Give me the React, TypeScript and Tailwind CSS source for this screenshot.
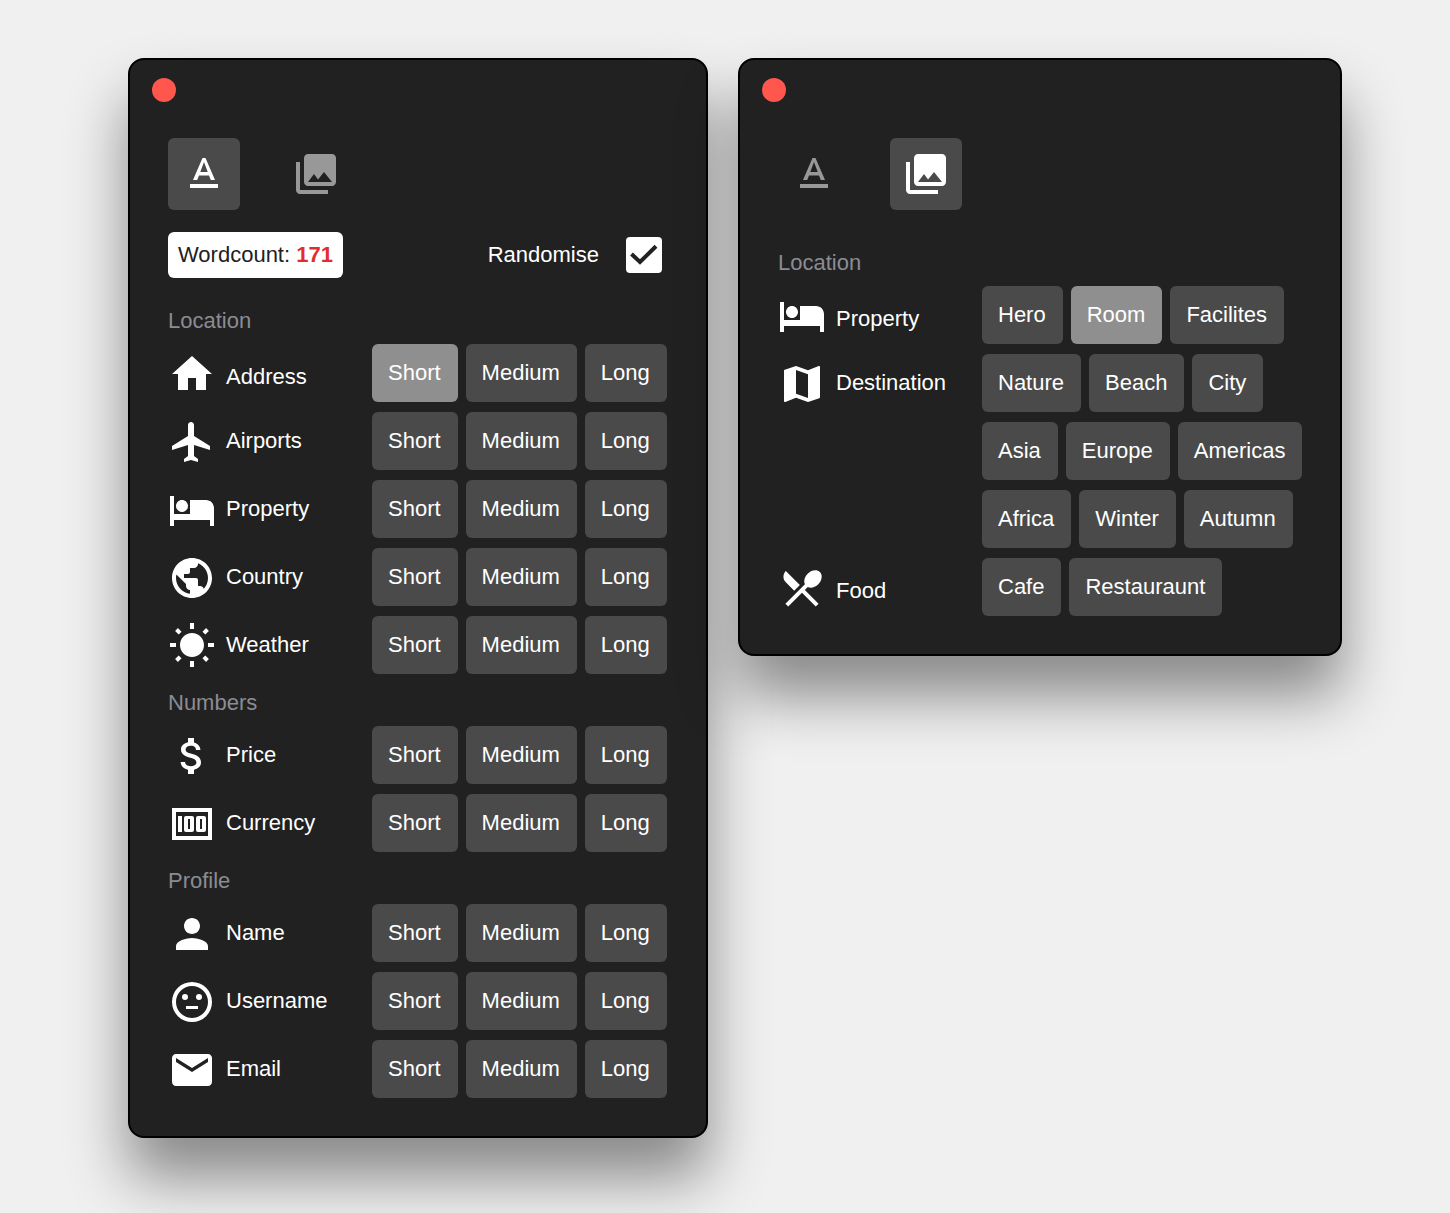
import { useState, type ComponentType, type ReactNode } from "react";
import {
  MdAttachMoney,
  MdEmail,
  MdHome,
  MdHotel,
  MdMap,
  MdPerson,
  MdPhotoLibrary,
  MdPublic,
  MdWbSunny,
} from "react-icons/md";

type Icon = ComponentType<{ className?: string }>;

function glyph(path: string): Icon {
  return function Glyph({ className }) {
    return (
      <svg viewBox="0 0 24 24" fill="currentColor" fillRule="evenodd" aria-hidden="true" className={className}>
        <path d={path} />
      </svg>
    );
  };
}

const TextFormatIcon = glyph(
  "M5 17v2h14v-2H5zm4.5-4.2h5l.9 2.2h2.1L12.75 4h-1.5L6.5 15h2.1l.9-2.2zM12 5.98L13.87 11h-3.74L12 5.98z",
);
const PlaneIcon = glyph(
  "M21 16v-2l-8-5V3.5c0-.83-.67-1.5-1.5-1.5S10 2.67 10 3.5V9l-8 5v2l8-2.5V19l-2 1.5V22l3.5-1 3.5 1v-1.5L13 19v-5.5l8 2.5z",
);
const BanknoteIcon = glyph(
  "M2 4h20v16H2V4zm2 2v12h16V6H4zM5 8h2v8H5V8zM9 8h3a1 1 0 0 1 1 1v6a1 1 0 0 1-1 1H9a1 1 0 0 1-1-1V9a1 1 0 0 1 1-1zm1 1.5v5h1v-5h-1zM15 8h3a1 1 0 0 1 1 1v6a1 1 0 0 1-1 1h-3a1 1 0 0 1-1-1V9a1 1 0 0 1 1-1zm1 1.5v5h1v-5h-1z",
);
const FaceIcon = glyph(
  "M12 2a10 10 0 1 0 0 20 10 10 0 0 0 0-20zm0 2a8 8 0 1 1 0 16 8 8 0 0 1 0-16zM9 14h6v1.5H9V14zM15.5 8a1.5 1.5 0 1 0 0 3 1.5 1.5 0 0 0 0-3zM8.5 8a1.5 1.5 0 1 0 0 3 1.5 1.5 0 0 0 0-3z",
);
const CutleryIcon = glyph(
  "M8.1 13.34l2.83-2.83L3.91 3.5c-1.56 1.56-1.56 4.09 0 5.66l4.19 4.18zm6.78-1.81c1.53.71 3.68.21 5.27-1.38 1.91-1.91 2.28-4.65.81-6.12-1.46-1.46-4.2-1.1-6.12.81-1.59 1.59-2.09 3.74-1.38 5.27L3.7 19.87l1.41 1.41L12 14.41l6.88 6.88 1.41-1.41L13.41 13l1.47-1.47z",
);

type Item = {
  label: string;
  icon: Icon;
  options: string[];
  selected?: string;
  low?: boolean;
};

type Group = { title: string; items: Item[] };

const lengths = ["Short", "Medium", "Long"];

const textGroups: Group[] = [
  {
    title: "Location",
    items: [
      { label: "Address", icon: MdHome, options: lengths, selected: "Short", low: true },
      { label: "Airports", icon: PlaneIcon, options: lengths },
      { label: "Property", icon: MdHotel, options: lengths },
      { label: "Country", icon: MdPublic, options: lengths },
      { label: "Weather", icon: MdWbSunny, options: lengths },
    ],
  },
  {
    title: "Numbers",
    items: [
      { label: "Price", icon: MdAttachMoney, options: lengths },
      { label: "Currency", icon: BanknoteIcon, options: lengths },
    ],
  },
  {
    title: "Profile",
    items: [
      { label: "Name", icon: MdPerson, options: lengths },
      { label: "Username", icon: FaceIcon, options: lengths },
      { label: "Email", icon: MdEmail, options: lengths },
    ],
  },
];

const imageGroups: Group[] = [
  {
    title: "Location",
    items: [
      {
        label: "Property",
        icon: MdHotel,
        options: ["Hero", "Room", "Facilites"],
        selected: "Room",
        low: true,
      },
      {
        label: "Destination",
        icon: MdMap,
        options: [
          "Nature",
          "Beach",
          "City",
          "Asia",
          "Europe",
          "Americas",
          "Africa",
          "Winter",
          "Autumn",
        ],
      },
      { label: "Food", icon: CutleryIcon, options: ["Cafe", "Restauraunt"], low: true },
    ],
  },
];

function TabButton({ icon: TabIcon, label, active }: { icon: Icon; label: string; active: boolean }) {
  return (
    <button
      type="button"
      aria-label={label}
      aria-pressed={active}
      className={`flex size-18 items-center justify-center rounded-md ${
        active ? "bg-[#4a4a4a] text-white" : "text-[#989898]"
      }`}
    >
      <TabIcon className="size-12" />
    </button>
  );
}

function Window({ active, children }: { active: "text" | "images"; children: ReactNode }) {
  return (
    <section className="rounded-2xl border-2 border-black bg-[#212121] pt-[18px] pb-[38px] shadow-[0_40px_60px_rgba(0,0,0,0.43)]">
      <button
        type="button"
        aria-label="Close"
        className="ml-[22px] block size-6 rounded-full bg-[#ff574d]"
      />
      <div className="mt-9 pr-9 pl-[38px]">
        <nav className="flex gap-10">
          <TabButton icon={TextFormatIcon} label="Text" active={active === "text"} />
          <TabButton icon={MdPhotoLibrary} label="Images" active={active === "images"} />
        </nav>
        {children}
      </div>
    </section>
  );
}

function Row({ item }: { item: Item }) {
  const RowIcon = item.icon;
  return (
    <div className="grid grid-cols-[204px_1fr]" role="group" aria-label={item.label}>
      <div className="flex gap-2.5">
        <RowIcon className="mt-1.5 size-12 shrink-0" />
        <span className={`flex h-[58px] items-center ${item.low ? "pt-2" : ""}`}>{item.label}</span>
      </div>
      <div className="flex flex-wrap gap-x-2 gap-y-2.5">
        {item.options.map((option) => (
          <button
            key={option}
            type="button"
            className={`h-[58px] rounded-md pr-[17px] pl-4 ${
              option === item.selected ? "bg-[#8f8f8f]" : "bg-[#4a4a4a]"
            }`}
          >
            {option}
          </button>
        ))}
      </div>
    </div>
  );
}

function Groups({ groups }: { groups: Group[] }) {
  return (
    <div className="flex flex-col gap-4">
      {groups.map((group) => (
        <section key={group.title}>
          <h2 className="mb-2.5 text-[#8a8c94]">{group.title}</h2>
          <div className="flex flex-col gap-2.5">
            {group.items.map((item) => (
              <Row key={item.label} item={item} />
            ))}
          </div>
        </section>
      ))}
    </div>
  );
}

export default function App() {
  const [randomise, setRandomise] = useState(true);
  return (
    <main className="min-h-screen bg-[#f0f0f0] pt-[58px] pr-[108px] pb-[75px] pl-32 font-['Liberation_Sans',Arial,sans-serif] text-[22px] leading-[26px] text-white">
      <div className="grid grid-cols-[580fr_604fr] items-start gap-[30px]">
        <Window active="text">
          <div className="mt-[22px] mb-[30px] flex items-center justify-between">
            <p className="rounded-md bg-white p-2.5 text-[#212121]">
              Wordcount: <strong className="font-bold text-[#e12d2d]">171</strong>
            </p>
            <label className="mr-2 flex items-center gap-[27px]">
              Randomise
              <span className="grid size-9 place-items-center">
                <input
                  type="checkbox"
                  checked={randomise}
                  onChange={(event) => setRandomise(event.target.checked)}
                  className="peer col-start-1 row-start-1 size-9 appearance-none rounded-sm bg-white"
                />
                <svg
                  viewBox="0 0 36 36"
                  fill="none"
                  stroke="#212121"
                  strokeWidth="4"
                  aria-hidden="true"
                  className="pointer-events-none col-start-1 row-start-1 hidden size-9 peer-checked:block"
                >
                  <path d="M5.5 17l8.5 8L30 9.3" />
                </svg>
              </span>
            </label>
          </div>
          <Groups groups={textGroups} />
        </Window>
        <Window active="images">
          <div className="mt-10">
            <Groups groups={imageGroups} />
          </div>
        </Window>
      </div>
    </main>
  );
}
